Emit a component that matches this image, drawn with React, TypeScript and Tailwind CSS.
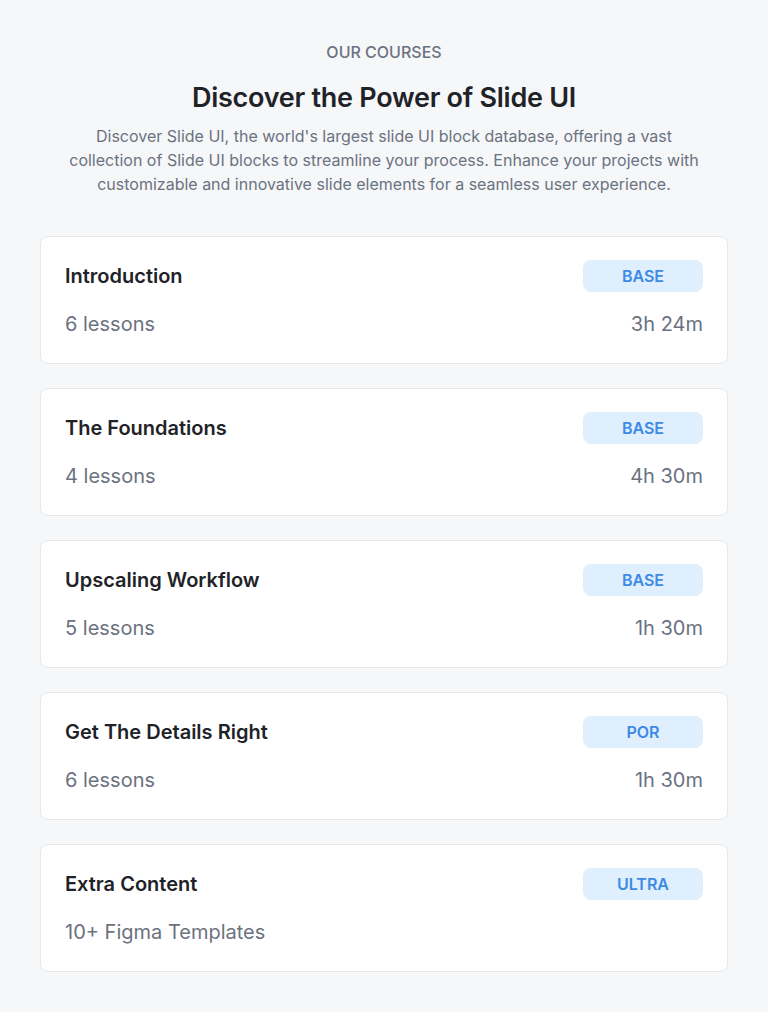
import React from 'react'

// ---------------------------------------------------------------------------
// Data
// ---------------------------------------------------------------------------

interface Course {
  title: string
  badge: string
  lessons: string
  duration?: string
}

const COURSES: Course[] = [
  { title: 'Introduction', badge: 'BASE', lessons: '6 lessons', duration: '3h 24m' },
  { title: 'The Foundations', badge: 'BASE', lessons: '4 lessons', duration: '4h 30m' },
  { title: 'Upscaling Workflow', badge: 'BASE', lessons: '5 lessons', duration: '1h 30m' },
  { title: 'Get The Details Right', badge: 'POR', lessons: '6 lessons', duration: '1h 30m' },
  { title: 'Extra Content', badge: 'ULTRA', lessons: '10+ Figma Templates' },
]

// ---------------------------------------------------------------------------
// CourseCard
// ---------------------------------------------------------------------------

const CourseCard: React.FC<{ course: Course }> = ({ course }) => (
  <div className="rounded-lg border border-[#e5e7eb] bg-white px-6 pt-[23px] pb-[25px]">
    <div className="flex items-center justify-between">
      <h3 className="text-xl font-semibold leading-7 text-[#1f2328]">{course.title}</h3>
      <span className="flex h-8 w-[120px] items-center justify-center rounded-lg bg-[#dfeffd] text-base font-semibold text-[#3d8ae6]">
        {course.badge}
      </span>
    </div>
    <div className="mt-[18px] flex items-center justify-between text-xl leading-7 text-[#6b7280]">
      <span>{course.lessons}</span>
      {course.duration && <span>{course.duration}</span>}
    </div>
  </div>
)

// ---------------------------------------------------------------------------
// App
// ---------------------------------------------------------------------------

export default function App() {
  return (
    <div
      className="min-h-[1012px] bg-[#f6f7f9] px-10 pt-10 pb-10"
      style={{ fontFamily: 'Inter, "Noto Sans", sans-serif' }}
    >
      <div className="text-center">
        <p className="text-base font-medium leading-6 text-[#6b7280]">OUR COURSES</p>
        <h2 className="mt-[18px] text-[27px] font-semibold leading-8 tracking-[-0.01em] text-[#1f2328]">
          Discover the Power of Slide UI
        </h2>
        <p className="mx-auto mt-2.5 max-w-[640px] text-base leading-6 text-[#6b7280]">
          Discover Slide UI, the world's largest slide UI block database, offering a vast
          collection of Slide UI blocks to streamline your process. Enhance your projects with
          customizable and innovative slide elements for a seamless user experience.
        </p>
      </div>

      <div className="mt-10 flex flex-col gap-6">
        {COURSES.map((c) => (
          <CourseCard key={c.title} course={c} />
        ))}
      </div>
    </div>
  )
}
